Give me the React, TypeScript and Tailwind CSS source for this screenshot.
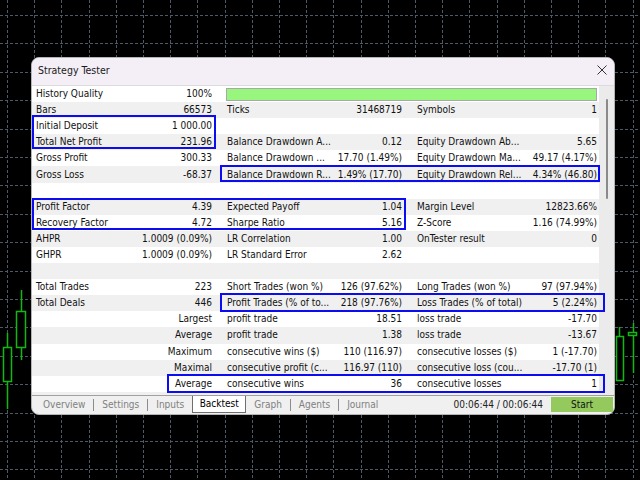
import type { ReactNode } from 'react';

type StatRow = {
  cells?: [string, string, string, string, string, string];
  progress?: boolean;
};

const ROWS: StatRow[] = [
  { cells: ['History Quality', '100%', '', '', '', ''], progress: true },
  { cells: ['Bars', '66573', 'Ticks', '31468719', 'Symbols', '1'] },
  { cells: ['Initial Deposit', '1 000.00', '', '', '', ''] },
  { cells: ['Total Net Profit', '231.96', 'Balance Drawdown A...', '0.12', 'Equity Drawdown Ab...', '5.65'] },
  { cells: ['Gross Profit', '300.33', 'Balance Drawdown ...', '17.70 (1.49%)', 'Equity Drawdown Ma...', '49.17 (4.17%)'] },
  { cells: ['Gross Loss', '-68.37', 'Balance Drawdown R...', '1.49% (17.70)', 'Equity Drawdown Rel...', '4.34% (46.80)'] },
  {},
  { cells: ['Profit Factor', '4.39', 'Expected Payoff', '1.04', 'Margin Level', '12823.66%'] },
  { cells: ['Recovery Factor', '4.72', 'Sharpe Ratio', '5.16', 'Z-Score', '1.16 (74.99%)'] },
  { cells: ['AHPR', '1.0009 (0.09%)', 'LR Correlation', '1.00', 'OnTester result', '0'] },
  { cells: ['GHPR', '1.0009 (0.09%)', 'LR Standard Error', '2.62', '', ''] },
  {},
  { cells: ['Total Trades', '223', 'Short Trades (won %)', '126 (97.62%)', 'Long Trades (won %)', '97 (97.94%)'] },
  { cells: ['Total Deals', '446', 'Profit Trades (% of to...', '218 (97.76%)', 'Loss Trades (% of total)', '5 (2.24%)'] },
  { cells: ['', 'Largest', 'profit trade', '18.51', 'loss trade', '-17.70'] },
  { cells: ['', 'Average', 'profit trade', '1.38', 'loss trade', '-13.67'] },
  { cells: ['', 'Maximum', 'consecutive wins ($)', '110 (116.97)', 'consecutive losses ($)', '1 (-17.70)'] },
  { cells: ['', 'Maximal', 'consecutive profit (c...', '116.97 (110)', 'consecutive loss (cou...', '-17.70 (1)'] },
  { cells: ['', 'Average', 'consecutive wins', '36', 'consecutive losses', '1'] },
];

const GREEN = '#10b810';

function ChartBackground() {
  const xs = Array.from({ length: 24 }, (_, i) => Math.round(7 + i * 27.2) + 0.5);
  const ys = Array.from({ length: 17 }, (_, i) => Math.round(15 + i * 28.4) + 0.5);
  return (
    <svg className="absolute inset-0" width="640" height="480" viewBox="0 0 640 480">
      {xs.map((x) => (
        <line key={`v${x}`} x1={x} y1={0} x2={x} y2={480} stroke="#4d5966" strokeDasharray="3 2" />
      ))}
      {ys.map((y) => (
        <line key={`h${y}`} x1={0} y1={y} x2={640} y2={y} stroke="#4d5966" strokeDasharray="3 2" />
      ))}
      {/* left candles */}
      <line x1={7.5} y1={333} x2={7.5} y2={409} stroke={GREEN} strokeWidth={1.5} />
      <rect x={3.5} y={347.5} width={8} height={34} fill="#000" stroke={GREEN} strokeWidth={1.5} />
      <line x1={21.5} y1={290} x2={21.5} y2={360} stroke={GREEN} strokeWidth={1.5} />
      <rect x={16.5} y={311.5} width={9} height={36} fill="#000" stroke={GREEN} strokeWidth={1.5} />
      {/* right candles */}
      <line x1={619.5} y1={327} x2={619.5} y2={336} stroke={GREEN} strokeWidth={1.5} />
      <rect x={616.5} y={336.5} width={7} height={44} fill="#000" stroke={GREEN} strokeWidth={1.5} />
      <line x1={633.5} y1={323} x2={633.5} y2={373} stroke={GREEN} strokeWidth={1.5} />
      <rect x={628.5} y={332.5} width={8} height={3} fill="#000" stroke={GREEN} strokeWidth={1.5} />
    </svg>
  );
}

function Cell({ label, value, className }: { label: string; value: string; className: string }) {
  return (
    <div className={`flex min-w-0 items-center justify-between whitespace-nowrap ${className}`}>
      <span>{label}</span>
      <span>{value}</span>
    </div>
  );
}

function Row({ row, index }: { row: StatRow; index: number }) {
  const bg = index % 2 === 0 ? 'bg-white' : 'bg-[#f0f0f0]';
  const c = row.cells ?? ['', '', '', '', '', ''];
  return (
    <div className={`grid h-[16.1px] grid-cols-[189px_191px_187px] items-center ${bg}`}>
      <Cell label={c[0]} value={c[1]} className="pl-[4px] pr-[9px]" />
      {row.progress ? (
        <div className="col-span-2 pl-[5px] pr-[2px]">
          <div className="h-[13px] border border-[#a8a8a8] bg-[#98f57e]" />
        </div>
      ) : (
        <>
          <Cell label={c[2]} value={c[3]} className="pl-[6px] pr-[10px]" />
          <Cell label={c[4]} value={c[5]} className="pl-[5px] pr-[2px]" />
        </>
      )}
    </div>
  );
}

function Tab({ children }: { children: ReactNode }) {
  return <div className="px-[8px] text-[#808080]">{children}</div>;
}

function Sep() {
  return <div className="h-[12px] w-px bg-[#8c8c8c]" />;
}

export default function App() {
  return (
    <div
      className="relative h-[480px] w-[640px] overflow-hidden bg-black pl-[31px] pt-[57px] text-[10px] leading-none text-[#111] font-stretch-condensed"
      style={{ fontFamily: '"DejaVu Sans Condensed", "DejaVu Sans", sans-serif' }}
    >
      <ChartBackground />

      <div className="relative flex h-[358px] w-[584px] flex-col rounded-lg border border-[#b4b4b4] bg-[#f0f0f0]">
        {/* title bar */}
        <div className="flex h-[28px] items-center justify-between rounded-t-[7px] border-b border-[#dcdcdc] bg-[#f4eff6] pb-[3px] pl-[6px] pr-[6px]">
          <span className="text-[10.5px] text-[#1a1a1a]">Strategy Tester</span>
          <svg width="10" height="10" viewBox="0 0 10 10" className="mr-[1px]">
            <path d="M0.5 0.5 L9.5 9.5 M9.5 0.5 L0.5 9.5" stroke="#333" strokeWidth="1" />
          </svg>
        </div>

        {/* report table + scrollbar */}
        <div className="flex h-[309px]">
          <div className="w-[567px]">
            {ROWS.map((row, i) => (
              <Row key={i} row={row} index={i} />
            ))}
          </div>
          <div className="relative w-[15px] bg-[#ebebeb]">
            <div className="absolute left-[7px] top-[13px] h-[100px] w-[2px] rounded-full bg-[#8a8a8a]" />
          </div>
        </div>

        {/* tabs */}
        <div className="flex h-[18px] items-stretch border-t border-[#a0a0a0]">
          <div className="ml-[3px] flex items-center">
            <Tab>Overview</Tab>
            <Sep />
            <Tab>Settings</Tab>
            <Sep />
            <Tab>Inputs</Tab>
          </div>
          <div className="flex w-[54px] items-center justify-center border-x border-b border-[#6e6e6e] bg-white text-black">
            Backtest
          </div>
          <div className="flex items-center">
            <Tab>Graph</Tab>
            <Sep />
            <Tab>Agents</Tab>
            <Sep />
            <Tab>Journal</Tab>
          </div>
          <div className="ml-auto flex items-center">
            <span className="mr-[8px] text-[#222]">00:06:44 / 00:06:44</span>
            <div className="mr-[1px] flex h-[15px] w-[62px] items-center justify-center bg-[#94c95e] text-[#111]">
              Start
            </div>
          </div>
        </div>

        {/* highlight frames */}
        <div className="pointer-events-none absolute left-0 top-[57px] h-[34px] w-[184px] border-2 border-[#0c0cf2]" />
        <div className="pointer-events-none absolute left-[188px] top-[107px] h-[17px] w-[380px] border-2 border-[#0c0cf2]" />
        <div className="pointer-events-none absolute left-0 top-[140px] h-[32px] w-[374px] border-2 border-[#0c0cf2]" />
        <div className="pointer-events-none absolute left-[188px] top-[235px] h-[19px] w-[385px] border-2 border-[#0c0cf2]" />
        <div className="pointer-events-none absolute left-[135px] top-[316px] h-[19px] w-[438px] border-2 border-[#0c0cf2]" />
      </div>
    </div>
  );
}
